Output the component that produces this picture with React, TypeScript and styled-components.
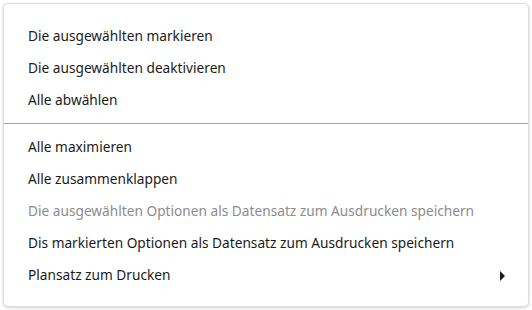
import styled, { createGlobalStyle } from "styled-components";

const Global = createGlobalStyle`
  body {
    margin: 0;
    padding: 3px;
    background: #ffffff;
    font-family: "Segoe UI", "Noto Sans", "Liberation Sans", sans-serif;
  }
`;

const Menu = styled.div`
  width: 526px;
  box-sizing: border-box;
  padding: 16px 0 15px;
  background: #ffffff;
  border: 1px solid #dcdcdc;
  border-radius: 5px;
  box-shadow: 0 1px 3px rgba(0, 0, 0, 0.18);
`;

const Item = styled.div<{ $disabled?: boolean }>`
  display: flex;
  align-items: center;
  justify-content: space-between;
  height: 32px;
  padding: 0 23px 0 24px;
  font-size: 13.7px;
  line-height: 18px;
  color: ${(p) => (p.$disabled ? "#8c8c8c" : "#1b1b1b")};
  white-space: nowrap;
`;

const Separator = styled.div`
  height: 1px;
  margin: 7px 0 7px;
  background: #a3a3a3;
`;

const Arrow = styled.span`
  width: 0;
  height: 0;
  margin-top: 1px;
  border-top: 5px solid transparent;
  border-bottom: 5px solid transparent;
  border-left: 5px solid #1b1b1b;
`;

const top = ["Die ausgewählten markieren", "Die ausgewählten deaktivieren", "Alle abwählen"];

export default function App() {
  return (
    <>
      <Global />
      <Menu>
        {top.map((t) => (
          <Item key={t}>{t}</Item>
        ))}
        <Separator />
        <Item>Alle maximieren</Item>
        <Item>Alle zusammenklappen</Item>
        <Item $disabled>Die ausgewählten Optionen als Datensatz zum Ausdrucken speichern</Item>
        <Item>Dis markierten Optionen als Datensatz zum Ausdrucken speichern</Item>
        <Item>
          Plansatz zum Drucken
          <Arrow />
        </Item>
      </Menu>
    </>
  );
}
